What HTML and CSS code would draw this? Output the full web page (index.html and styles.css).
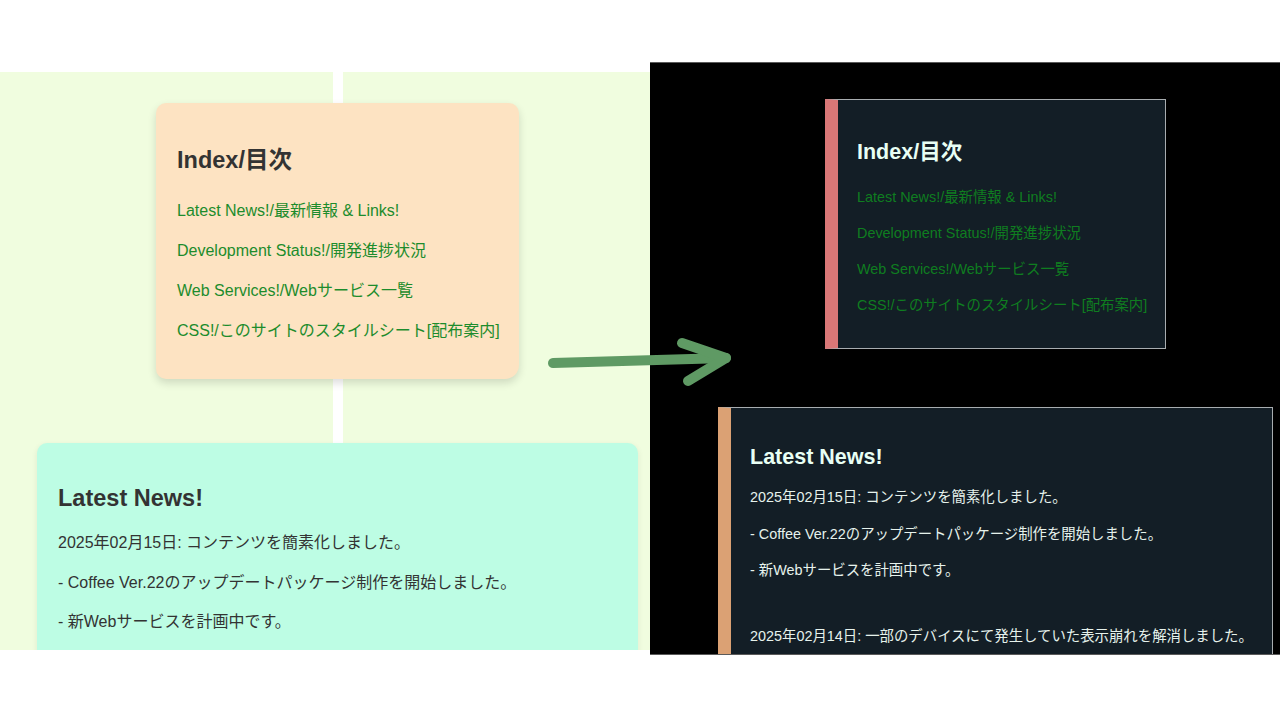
FILE: index.html
```html
<!DOCTYPE html>
<html lang="ja">
<head>
<meta charset="utf-8">
<title>Before / After</title>
<link rel="stylesheet" href="styles.css">
</head>
<body>
<div class="stage">
  <section class="panel light">
    <div class="card toc">
      <h2 class="title">Index/目次</h2>
      <nav class="links">
        <a href="#news">Latest News!/最新情報 &amp; Links!</a>
        <a href="#dev">Development Status!/開発進捗状況</a>
        <a href="#web">Web Services!/Webサービス一覧</a>
        <a href="#css">CSS!/このサイトのスタイルシート[配布案内]</a>
      </nav>
    </div>
    <div class="card news">
      <h2 class="title">Latest News!</h2>
      <div class="lines">
        <p>2025年02月15日: コンテンツを簡素化しました。</p>
        <p>- Coffee Ver.22のアップデートパッケージ制作を開始しました。</p>
        <p>- 新Webサービスを計画中です。</p>
      </div>
    </div>
  </section>
  <section class="panel dark">
    <div class="dcard dtoc">
      <h2 class="dtitle">Index/目次</h2>
      <nav class="dlinks">
        <a href="#news">Latest News!/最新情報 &amp; Links!</a>
        <a href="#dev">Development Status!/開発進捗状況</a>
        <a href="#web">Web Services!/Webサービス一覧</a>
        <a href="#css">CSS!/このサイトのスタイルシート[配布案内]</a>
      </nav>
    </div>
    <div class="dcard dnews">
      <h2 class="dtitle">Latest News!</h2>
      <div class="dlines">
        <p>2025年02月15日: コンテンツを簡素化しました。</p>
        <p>- Coffee Ver.22のアップデートパッケージ制作を開始しました。</p>
        <p>- 新Webサービスを計画中です。</p>
        <p class="spaced">2025年02月14日: 一部のデバイスにて発生していた表示崩れを解消しました。</p>
      </div>
    </div>
  </section>
  <svg class="arrow" width="200" height="64" viewBox="0 0 200 64" aria-hidden="true">
    <path d="M13 33 L186 28" fill="none" stroke="#5f9a64" stroke-width="10" stroke-linecap="round"/>
    <path d="M142 13 L186 28 L148 51" fill="none" stroke="#5f9a64" stroke-width="10" stroke-linecap="round" stroke-linejoin="round"/>
  </svg>
</div>
</body>
</html>
```
FILE: styles.css
```css
html, body {
  margin: 0;
  padding: 0;
  background: #ffffff;
}
body {
  width: 1280px;
  height: 720px;
  overflow: hidden;
  font-family: "Liberation Sans", Arial, "Noto Sans CJK JP", sans-serif;
}
.stage {
  position: relative;
  display: flex;
  align-items: flex-start;
  width: 1280px;
  height: 720px;
}
.panel {
  overflow: hidden;
  box-sizing: border-box;
  display: flex;
  flex-direction: column;
  align-items: flex-start;
}
.light {
  width: 650px;
  height: 578px;
  margin-top: 72px;
  padding-top: 31px;
  background: linear-gradient(to right, #f0fddf 0, #f0fddf 333px, #ffffff 333px, #ffffff 343px, #f0fddf 343px);
}
.card {
  box-sizing: border-box;
  border-radius: 10px;
  flex-shrink: 0;
}
.toc {
  width: 363px;
  margin-left: 156px;
  padding: 43px 21px 38px;
  background: #fde3c2;
  box-shadow: 0 4px 8px rgba(0, 0, 0, 0.14);
  border-bottom-right-radius: 14px;
}
.news {
  width: 601px;
  margin-left: 37px;
  margin-top: 64px;
  padding: 41px 21px 30px;
  background: #bdfde4;
  box-shadow: 0 2px 6px rgba(0, 0, 0, 0.08);
  min-height: 260px;
}
.title {
  margin: 0;
  font-size: 23.5px;
  line-height: 28px;
  font-weight: bold;
  color: #333333;
}
.links {
  display: flex;
  flex-direction: column;
  gap: 20px;
  margin-top: 27px;
}
.links a {
  display: block;
  font-size: 16px;
  line-height: 20px;
  color: #1c8c2c;
  text-decoration: none;
  white-space: nowrap;
}
.lines {
  display: flex;
  flex-direction: column;
  gap: 19.5px;
  margin-top: 21px;
}
.lines p {
  margin: 0;
  font-size: 16px;
  line-height: 20px;
  color: #333333;
  white-space: nowrap;
}
.dark {
  width: 630px;
  height: 593px;
  margin-top: 62px;
  padding-top: 36px;
  background: #000000;
  border-top: 1px solid #5a5a5a;
  border-bottom: 1px solid #5a5a5a;
}
.dcard {
  box-sizing: border-box;
  flex-shrink: 0;
  background: #131e26;
  border: 1px solid #a8adb0;
  border-left-width: 13px;
}
.dtoc {
  width: 341px;
  margin-left: 175px;
  padding: 39px 19px 34px;
  border-left-color: #d97777;
}
.dnews {
  width: 555px;
  margin-left: 68px;
  margin-top: 58px;
  padding: 36px 19px 30px;
  border-left-color: #dba174;
  min-height: 300px;
}
.dtitle {
  margin: 0;
  font-size: 21.5px;
  line-height: 26px;
  font-weight: bold;
  color: #e8fff4;
}
.dlinks {
  display: flex;
  flex-direction: column;
  gap: 18px;
  margin-top: 23px;
}
.dlinks a {
  display: block;
  font-size: 14.4px;
  line-height: 18px;
  color: #0f7d20;
  text-decoration: none;
  white-space: nowrap;
}
.dlines {
  display: flex;
  flex-direction: column;
  gap: 18.5px;
  margin-top: 18px;
}
.dlines p {
  margin: 0;
  font-size: 14.4px;
  line-height: 18px;
  color: #e6f2ec;
  white-space: nowrap;
}
.dlines .spaced {
  margin-top: 29px;
}
.arrow {
  position: absolute;
  left: 540px;
  top: 330px;
}
```
